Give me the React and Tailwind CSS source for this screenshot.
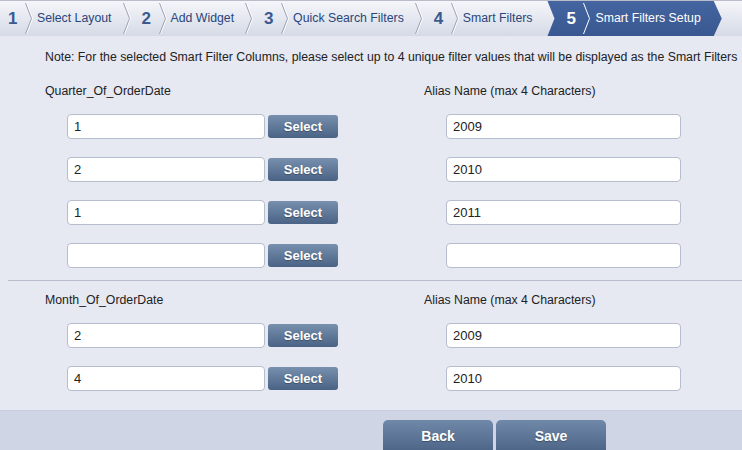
import React from 'react';

const font = { fontFamily: '"Liberation Sans", Arial, sans-serif' };

function Chevron({ light }) {
  return (
    <svg width="8" height="35" viewBox="0 0 8 35" className="shrink-0">
      {light ? (
        <polyline points="0.5,2 6.5,17.5 0.5,33" fill="none" stroke="#ffffff" strokeWidth="1" />
      ) : (
        <>
          <polyline points="1.5,2 7.5,17.5 1.5,33" fill="none" stroke="#ffffff" strokeWidth="1" />
          <polyline points="0.5,2 6.5,17.5 0.5,33" fill="none" stroke="#9ba3b4" strokeWidth="1" />
        </>
      )}
    </svg>
  );
}

const steps = [
  { n: '1', label: 'Select Layout' },
  { n: '2', label: 'Add Widget' },
  { n: '3', label: 'Quick Search Filters' },
  { n: '4', label: 'Smart Filters' },
];

function Breadcrumb() {
  return (
    <div className="flex h-[36px] items-stretch border-t border-[#b8bdc9] bg-gradient-to-b from-[#f5f6fa] to-[#d5dae6]">
      {steps.map((s, i) => (
        <div key={s.n} className="flex items-center">
          <span className={`text-[17px] font-bold text-[#3a5a8e] ${i === 0 ? 'w-[25px] pl-[8px]' : 'w-[28px] pl-[11px]'}`}>{s.n}</span>
          <Chevron />
          <span className={`pl-[4px] text-[12.3px] text-[#28467c] ${i === 3 ? 'pr-[15px]' : 'pr-[11px]'}`}>{s.label}</span>
          {i < 3 && <Chevron />}
        </div>
      ))}
      <div className="flex items-center bg-gradient-to-b from-[#4465a0] to-[#395891] pr-[21px] [clip-path:polygon(0_0,calc(100%-8px)_0,100%_50%,calc(100%-8px)_100%,0_100%,7px_50%)]">
        <span className="w-[36px] pl-[19px] text-[17px] font-bold text-white">5</span>
        <Chevron light />
        <span className="pl-[4px] text-[12.3px] text-white">Smart Filters Setup</span>
      </div>
    </div>
  );
}

function Row({ value, alias }) {
  return (
    <div className="flex items-center">
      <div className="flex w-[379px] items-center pl-[22px]">
        <div className="flex h-[25px] w-[198px] items-center rounded-[4px] border border-[#b6bdcc] bg-white pl-[6px] text-[13px] text-[#222]">
          {value}
        </div>
        <button className="ml-[3px] h-[23px] w-[70px] rounded-[3px] bg-gradient-to-b from-[#7890ae] to-[#4a6385] text-[13px] font-bold text-white [text-shadow:0_1px_1px_rgba(0,0,0,0.3)]">
          Select
        </button>
      </div>
      <div className="pl-[22px]">
        <div className="flex h-[25px] w-[235px] items-center rounded-[4px] border border-[#b6bdcc] bg-white pl-[6px] text-[13px] text-[#222]">
          {alias}
        </div>
      </div>
    </div>
  );
}

function Section({ title, rows }) {
  return (
    <div className="pl-[45px]">
      <div className="flex text-[12.3px] leading-[14px] text-[#222]">
        <span className="w-[379px]">{title}</span>
        <span>Alias Name (max 4 Characters)</span>
      </div>
      <div className="mt-[16px] flex flex-col gap-[18px]">
        {rows.map((r, i) => (
          <Row key={i} value={r[0]} alias={r[1]} />
        ))}
      </div>
    </div>
  );
}

export default function App() {
  return (
    <div style={font} className="flex h-[450px] w-[742px] flex-col overflow-hidden bg-[#e6e8f2]">
      <Breadcrumb />
      <div className="pt-[14px]">
        <p className="pl-[45px] text-[12.3px] leading-[14px] whitespace-nowrap text-[#222]">
          Note: For the selected Smart Filter Columns, please select up to 4 unique filter values that will be displayed as the Smart Filters
        </p>
        <div className="mt-[20px]">
          <Section
            title="Quarter_Of_OrderDate"
            rows={[['1', '2009'], ['2', '2010'], ['1', '2011'], ['', '']]}
          />
        </div>
        <div className="ml-[8px] mt-[12px] border-t border-[#b7bdcc] pt-[12px]">
          <div className="-ml-[8px]">
            <Section title="Month_Of_OrderDate" rows={[['2', '2009'], ['4', '2010']]} />
          </div>
        </div>
      </div>
      <div className="mt-[19px] flex flex-1 gap-[3px] border-t border-[#c6cbdd] bg-[#cfd5e5] pl-[383px] pt-[9px]">
        <button className="h-[34px] w-[110px] rounded-t-[5px] bg-gradient-to-b from-[#7089a9] to-[#4a6385] pb-[2px] text-[14px] font-bold text-white [text-shadow:0_1px_1px_rgba(0,0,0,0.3)]">
          Back
        </button>
        <button className="h-[34px] w-[110px] rounded-t-[5px] bg-gradient-to-b from-[#7089a9] to-[#4a6385] pb-[2px] text-[14px] font-bold text-white [text-shadow:0_1px_1px_rgba(0,0,0,0.3)]">
          Save
        </button>
      </div>
    </div>
  );
}
